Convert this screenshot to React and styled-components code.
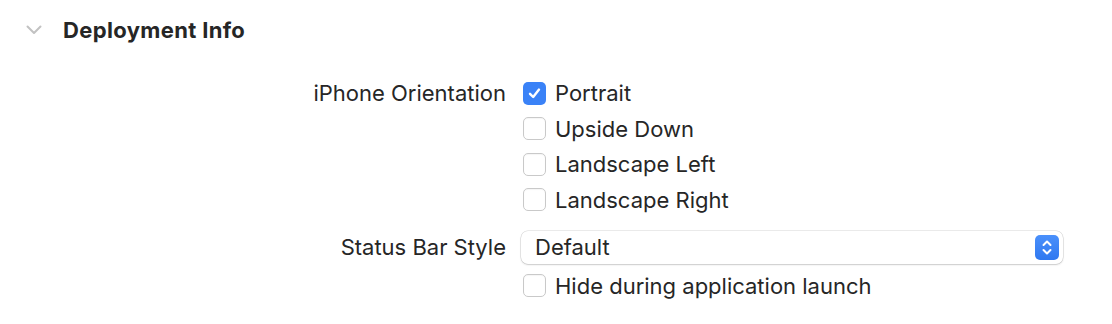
import React from 'react';
import styled, { createGlobalStyle } from 'styled-components';

const Global = createGlobalStyle`
  body {
    margin: 0;
    background: #ffffff;
    font-family: Inter, "Noto Sans", sans-serif;
    color: #262626;
    -webkit-font-smoothing: antialiased;
  }
`;

const Page = styled.div`
  width: 1112px;
  height: 324px;
  padding-top: 15px;
  box-sizing: border-box;
`;

const Header = styled.div`
  display: flex;
  align-items: center;
  height: 30px;
  padding-left: 26px;
  gap: 21px;
`;

const Title = styled.h2`
  margin: 0;
  font-size: 22px;
  font-weight: 700;
  color: #262626;
  letter-spacing: 0.35px;
`;

const Form = styled.div`
  display: grid;
  grid-template-columns: 506px 556px;
  column-gap: 15px;
  margin-top: 36px;
  align-items: start;
`;

const Label = styled.div`
  text-align: right;
  font-size: 22px;
  line-height: 24px;
  padding-top: ${p => p.$pt || 0}px;
  color: #262626;
`;

const Options = styled.div`
  display: flex;
  flex-direction: column;
  gap: 11.5px;
  padding-left: 2px;
  margin-bottom: ${p => p.$mb || 0}px;
`;

const Option = styled.label`
  display: flex;
  align-items: center;
  gap: 9px;
  font-size: 22px;
  line-height: 24px;
  color: #262626;
`;

const Box = styled.span`
  width: 23px;
  height: 23px;
  flex: none;
  box-sizing: border-box;
  border-radius: 5px;
  display: flex;
  align-items: center;
  justify-content: center;
  background: ${p => (p.$checked ? '#3a82f7' : '#ffffff')};
  border: ${p => (p.$checked ? 'none' : '1px solid #c9c9c9')};
  box-shadow: ${p => (p.$checked ? 'none' : 'inset 0 1px 1px rgba(0,0,0,0.04)')};
`;

const Select = styled.div`
  width: 542px;
  height: 33px;
  box-sizing: border-box;
  border-radius: 7px;
  background: #fff;
  box-shadow: 0 0 0 0.5px rgba(0,0,0,0.16), 0 1px 2px rgba(0,0,0,0.14);
  display: flex;
  align-items: center;
  justify-content: space-between;
  padding: 0 4px 0 14px;
  font-size: 22px;
  color: #262626;
  margin-bottom: 10px;
`;

const Stepper = styled.span`
  width: 24px;
  height: 25px;
  border-radius: 5px;
  background: linear-gradient(#4a90fb, #2f78f0);
  display: flex;
  align-items: center;
  justify-content: center;
`;

function Checkbox({ checked, children }) {
  return (
    <Option>
      <Box $checked={checked}>
        {checked && (
          <svg width="15" height="15" viewBox="0 0 15 15">
            <path d="M3 7.8 L6.2 11 L12 3.6" fill="none" stroke="#fff" strokeWidth="2.4" strokeLinecap="round" strokeLinejoin="round" />
          </svg>
        )}
      </Box>
      {children}
    </Option>
  );
}

export default function App() {
  return (
    <Page>
      <Global />
      <Header>
        <svg width="16" height="10" viewBox="0 0 16 10">
          <path d="M1.5 1.5 L8 8 L14.5 1.5" fill="none" stroke="#c2c2c2" strokeWidth="2" strokeLinecap="round" strokeLinejoin="round" />
        </svg>
        <Title>Deployment Info</Title>
      </Header>
      <Form>
        <Label>iPhone Orientation</Label>
        <Options $mb={19}>
          <Checkbox checked>Portrait</Checkbox>
          <Checkbox>Upside Down</Checkbox>
          <Checkbox>Landscape Left</Checkbox>
          <Checkbox>Landscape Right</Checkbox>
        </Options>
        <Label $pt={4}>Status Bar Style</Label>
        <div>
          <Select>
            Default
            <Stepper>
              <svg width="12" height="17" viewBox="0 0 12 17">
                <path d="M2.5 6 L6 2.5 L9.5 6 M2.5 11 L6 14.5 L9.5 11" fill="none" stroke="#fff" strokeWidth="2" strokeLinecap="round" strokeLinejoin="round" />
              </svg>
            </Stepper>
          </Select>
          <Options>
            <Checkbox>Hide during application launch</Checkbox>
          </Options>
        </div>
      </Form>
    </Page>
  );
}
